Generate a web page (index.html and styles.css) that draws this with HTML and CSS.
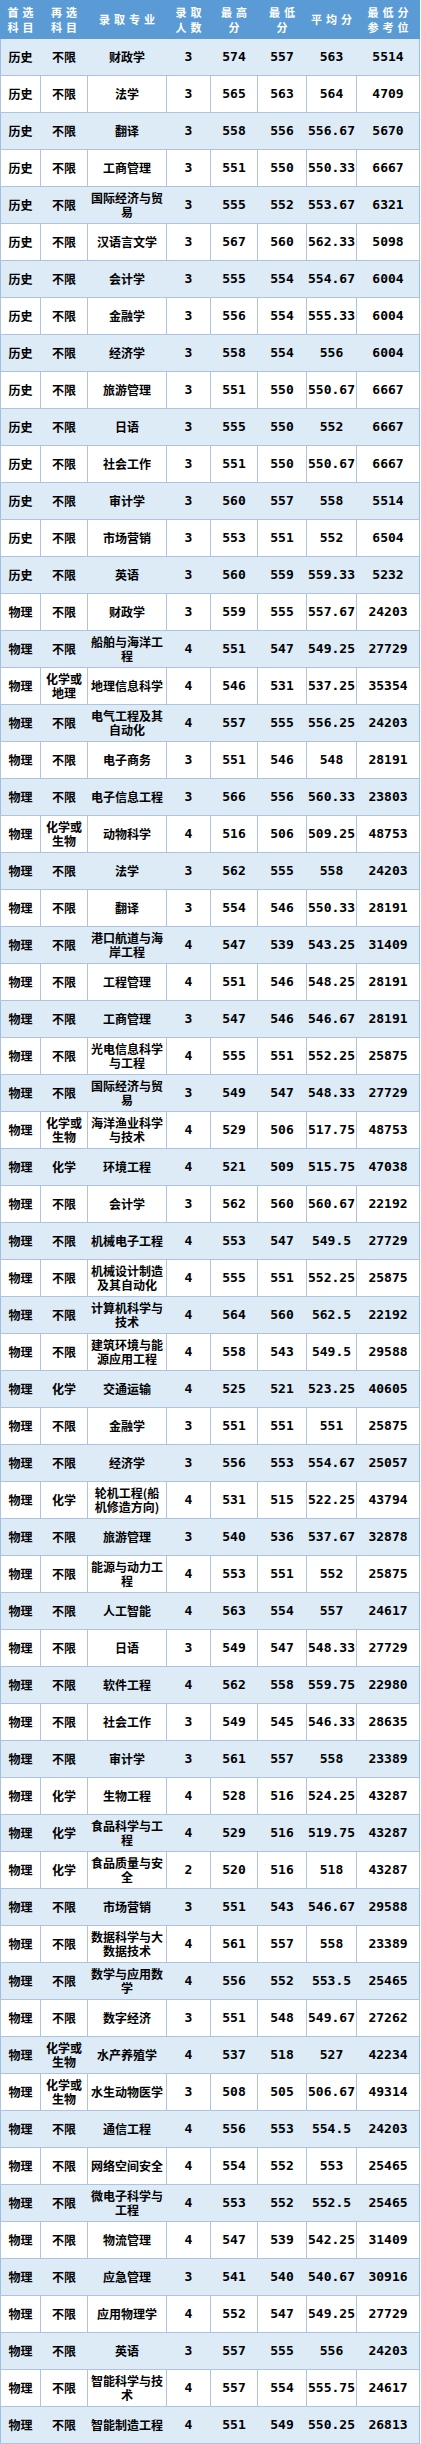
FILE: index.html
```html
<!DOCTYPE html>
<html lang="zh-CN">
<head>
<meta charset="utf-8">
<title>录取分数</title>
<link rel="stylesheet" href="styles.css">
</head>
<body>
<table class="grid">
<colgroup>
<col class="c1"><col class="c2"><col class="c3"><col class="c4"><col class="c5"><col class="c6"><col class="c7"><col class="c8">
</colgroup>
<thead>
<tr><th>首选<br>科目</th><th>再选<br>科目</th><th>录取专业</th><th>录取<br>人数</th><th>最高<br>分</th><th>最低<br>分</th><th>平均分</th><th>最低分<br>参考位</th></tr>
</thead>
<tbody>
<tr class="alt"><td>历史</td><td>不限</td><td>财政学</td><td>3</td><td>574</td><td>557</td><td>563</td><td>5514</td></tr>
<tr><td>历史</td><td>不限</td><td>法学</td><td>3</td><td>565</td><td>563</td><td>564</td><td>4709</td></tr>
<tr class="alt"><td>历史</td><td>不限</td><td>翻译</td><td>3</td><td>558</td><td>556</td><td>556.67</td><td>5670</td></tr>
<tr><td>历史</td><td>不限</td><td>工商管理</td><td>3</td><td>551</td><td>550</td><td>550.33</td><td>6667</td></tr>
<tr class="alt"><td>历史</td><td>不限</td><td>国际经济与贸易</td><td>3</td><td>555</td><td>552</td><td>553.67</td><td>6321</td></tr>
<tr><td>历史</td><td>不限</td><td>汉语言文学</td><td>3</td><td>567</td><td>560</td><td>562.33</td><td>5098</td></tr>
<tr class="alt"><td>历史</td><td>不限</td><td>会计学</td><td>3</td><td>555</td><td>554</td><td>554.67</td><td>6004</td></tr>
<tr><td>历史</td><td>不限</td><td>金融学</td><td>3</td><td>556</td><td>554</td><td>555.33</td><td>6004</td></tr>
<tr class="alt"><td>历史</td><td>不限</td><td>经济学</td><td>3</td><td>558</td><td>554</td><td>556</td><td>6004</td></tr>
<tr><td>历史</td><td>不限</td><td>旅游管理</td><td>3</td><td>551</td><td>550</td><td>550.67</td><td>6667</td></tr>
<tr class="alt"><td>历史</td><td>不限</td><td>日语</td><td>3</td><td>555</td><td>550</td><td>552</td><td>6667</td></tr>
<tr><td>历史</td><td>不限</td><td>社会工作</td><td>3</td><td>551</td><td>550</td><td>550.67</td><td>6667</td></tr>
<tr class="alt"><td>历史</td><td>不限</td><td>审计学</td><td>3</td><td>560</td><td>557</td><td>558</td><td>5514</td></tr>
<tr><td>历史</td><td>不限</td><td>市场营销</td><td>3</td><td>553</td><td>551</td><td>552</td><td>6504</td></tr>
<tr class="alt"><td>历史</td><td>不限</td><td>英语</td><td>3</td><td>560</td><td>559</td><td>559.33</td><td>5232</td></tr>
<tr><td>物理</td><td>不限</td><td>财政学</td><td>3</td><td>559</td><td>555</td><td>557.67</td><td>24203</td></tr>
<tr class="alt"><td>物理</td><td>不限</td><td>船舶与海洋工程</td><td>4</td><td>551</td><td>547</td><td>549.25</td><td>27729</td></tr>
<tr><td>物理</td><td>化学或地理</td><td>地理信息科学</td><td>4</td><td>546</td><td>531</td><td>537.25</td><td>35354</td></tr>
<tr class="alt"><td>物理</td><td>不限</td><td>电气工程及其自动化</td><td>4</td><td>557</td><td>555</td><td>556.25</td><td>24203</td></tr>
<tr><td>物理</td><td>不限</td><td>电子商务</td><td>3</td><td>551</td><td>546</td><td>548</td><td>28191</td></tr>
<tr class="alt"><td>物理</td><td>不限</td><td>电子信息工程</td><td>3</td><td>566</td><td>556</td><td>560.33</td><td>23803</td></tr>
<tr><td>物理</td><td>化学或生物</td><td>动物科学</td><td>4</td><td>516</td><td>506</td><td>509.25</td><td>48753</td></tr>
<tr class="alt"><td>物理</td><td>不限</td><td>法学</td><td>3</td><td>562</td><td>555</td><td>558</td><td>24203</td></tr>
<tr><td>物理</td><td>不限</td><td>翻译</td><td>3</td><td>554</td><td>546</td><td>550.33</td><td>28191</td></tr>
<tr class="alt"><td>物理</td><td>不限</td><td>港口航道与海岸工程</td><td>4</td><td>547</td><td>539</td><td>543.25</td><td>31409</td></tr>
<tr><td>物理</td><td>不限</td><td>工程管理</td><td>4</td><td>551</td><td>546</td><td>548.25</td><td>28191</td></tr>
<tr class="alt"><td>物理</td><td>不限</td><td>工商管理</td><td>3</td><td>547</td><td>546</td><td>546.67</td><td>28191</td></tr>
<tr><td>物理</td><td>不限</td><td>光电信息科学与工程</td><td>4</td><td>555</td><td>551</td><td>552.25</td><td>25875</td></tr>
<tr class="alt"><td>物理</td><td>不限</td><td>国际经济与贸易</td><td>3</td><td>549</td><td>547</td><td>548.33</td><td>27729</td></tr>
<tr><td>物理</td><td>化学或生物</td><td>海洋渔业科学与技术</td><td>4</td><td>529</td><td>506</td><td>517.75</td><td>48753</td></tr>
<tr class="alt"><td>物理</td><td>化学</td><td>环境工程</td><td>4</td><td>521</td><td>509</td><td>515.75</td><td>47038</td></tr>
<tr><td>物理</td><td>不限</td><td>会计学</td><td>3</td><td>562</td><td>560</td><td>560.67</td><td>22192</td></tr>
<tr class="alt"><td>物理</td><td>不限</td><td>机械电子工程</td><td>4</td><td>553</td><td>547</td><td>549.5</td><td>27729</td></tr>
<tr><td>物理</td><td>不限</td><td>机械设计制造及其自动化</td><td>4</td><td>555</td><td>551</td><td>552.25</td><td>25875</td></tr>
<tr class="alt"><td>物理</td><td>不限</td><td>计算机科学与技术</td><td>4</td><td>564</td><td>560</td><td>562.5</td><td>22192</td></tr>
<tr><td>物理</td><td>不限</td><td>建筑环境与能源应用工程</td><td>4</td><td>558</td><td>543</td><td>549.5</td><td>29588</td></tr>
<tr class="alt"><td>物理</td><td>化学</td><td>交通运输</td><td>4</td><td>525</td><td>521</td><td>523.25</td><td>40605</td></tr>
<tr><td>物理</td><td>不限</td><td>金融学</td><td>3</td><td>551</td><td>551</td><td>551</td><td>25875</td></tr>
<tr class="alt"><td>物理</td><td>不限</td><td>经济学</td><td>3</td><td>556</td><td>553</td><td>554.67</td><td>25057</td></tr>
<tr><td>物理</td><td>化学</td><td>轮机工程(船机修造方向)</td><td>4</td><td>531</td><td>515</td><td>522.25</td><td>43794</td></tr>
<tr class="alt"><td>物理</td><td>不限</td><td>旅游管理</td><td>3</td><td>540</td><td>536</td><td>537.67</td><td>32878</td></tr>
<tr><td>物理</td><td>不限</td><td>能源与动力工程</td><td>4</td><td>553</td><td>551</td><td>552</td><td>25875</td></tr>
<tr class="alt"><td>物理</td><td>不限</td><td>人工智能</td><td>4</td><td>563</td><td>554</td><td>557</td><td>24617</td></tr>
<tr><td>物理</td><td>不限</td><td>日语</td><td>3</td><td>549</td><td>547</td><td>548.33</td><td>27729</td></tr>
<tr class="alt"><td>物理</td><td>不限</td><td>软件工程</td><td>4</td><td>562</td><td>558</td><td>559.75</td><td>22980</td></tr>
<tr><td>物理</td><td>不限</td><td>社会工作</td><td>3</td><td>549</td><td>545</td><td>546.33</td><td>28635</td></tr>
<tr class="alt"><td>物理</td><td>不限</td><td>审计学</td><td>3</td><td>561</td><td>557</td><td>558</td><td>23389</td></tr>
<tr><td>物理</td><td>化学</td><td>生物工程</td><td>4</td><td>528</td><td>516</td><td>524.25</td><td>43287</td></tr>
<tr class="alt"><td>物理</td><td>化学</td><td>食品科学与工程</td><td>4</td><td>529</td><td>516</td><td>519.75</td><td>43287</td></tr>
<tr><td>物理</td><td>化学</td><td>食品质量与安全</td><td>2</td><td>520</td><td>516</td><td>518</td><td>43287</td></tr>
<tr class="alt"><td>物理</td><td>不限</td><td>市场营销</td><td>3</td><td>551</td><td>543</td><td>546.67</td><td>29588</td></tr>
<tr><td>物理</td><td>不限</td><td>数据科学与大数据技术</td><td>4</td><td>561</td><td>557</td><td>558</td><td>23389</td></tr>
<tr class="alt"><td>物理</td><td>不限</td><td>数学与应用数学</td><td>4</td><td>556</td><td>552</td><td>553.5</td><td>25465</td></tr>
<tr><td>物理</td><td>不限</td><td>数字经济</td><td>3</td><td>551</td><td>548</td><td>549.67</td><td>27262</td></tr>
<tr class="alt"><td>物理</td><td>化学或生物</td><td>水产养殖学</td><td>4</td><td>537</td><td>518</td><td>527</td><td>42234</td></tr>
<tr><td>物理</td><td>化学或生物</td><td>水生动物医学</td><td>3</td><td>508</td><td>505</td><td>506.67</td><td>49314</td></tr>
<tr class="alt"><td>物理</td><td>不限</td><td>通信工程</td><td>4</td><td>556</td><td>553</td><td>554.5</td><td>24203</td></tr>
<tr><td>物理</td><td>不限</td><td>网络空间安全</td><td>4</td><td>554</td><td>552</td><td>553</td><td>25465</td></tr>
<tr class="alt"><td>物理</td><td>不限</td><td>微电子科学与工程</td><td>4</td><td>553</td><td>552</td><td>552.5</td><td>25465</td></tr>
<tr><td>物理</td><td>不限</td><td>物流管理</td><td>4</td><td>547</td><td>539</td><td>542.25</td><td>31409</td></tr>
<tr class="alt"><td>物理</td><td>不限</td><td>应急管理</td><td>3</td><td>541</td><td>540</td><td>540.67</td><td>30916</td></tr>
<tr><td>物理</td><td>不限</td><td>应用物理学</td><td>4</td><td>552</td><td>547</td><td>549.25</td><td>27729</td></tr>
<tr class="alt"><td>物理</td><td>不限</td><td>英语</td><td>3</td><td>557</td><td>555</td><td>556</td><td>24203</td></tr>
<tr><td>物理</td><td>不限</td><td>智能科学与技术</td><td>4</td><td>557</td><td>554</td><td>555.75</td><td>24617</td></tr>
<tr class="alt"><td>物理</td><td>不限</td><td>智能制造工程</td><td>4</td><td>551</td><td>549</td><td>550.25</td><td>26813</td></tr>
</tbody>
</table>
</body>
</html>
```

FILE: styles.css
```css
html, body {
  margin: 0;
  padding: 0;
  background: #ffffff;
}

.grid {
  table-layout: fixed;
  border-collapse: collapse;
  width: 420px;
  font-family: "Noto Sans CJK SC", "Noto Sans", sans-serif;
  color: #000000;
}

.c1 { width: 40px; }
.c2 { width: 47px; }
.c3 { width: 79px; }
.c4 { width: 44px; }
.c5 { width: 47px; }
.c6 { width: 49px; }
.c7 { width: 50px; }
.c8 { width: 63px; }

.grid th {
  height: 37px;
  padding: 0 0 0 4px;
  background: #5b9bd5;
  color: #ffffff;
  font-size: 11px;
  font-weight: 700;
  line-height: 15px;
  letter-spacing: 4px;
  text-align: center;
  vertical-align: middle;
  border: 1px solid #5b9bd5;
}

.grid td {
  height: 36px;
  padding: 0 2px;
  font-size: 12px;
  font-weight: 700;
  line-height: 14px;
  text-align: center;
  vertical-align: middle;
  border: 1px solid #aec3df;
  background: #ffffff;
}

.grid td:nth-child(n+4) {
  font-family: "DejaVu Sans Mono", "Liberation Mono", monospace;
  font-size: 13px;
  padding: 0;
}

.grid tr.alt td {
  background: #ddebf7;
  border-left-color: #ddebf7;
  border-right-color: #ddebf7;
}

.grid tr.alt td:first-child {
  border-left-color: #9dbfe3;
}

.grid tr.alt td:last-child {
  border-right-color: #9dbfe3;
}
```
